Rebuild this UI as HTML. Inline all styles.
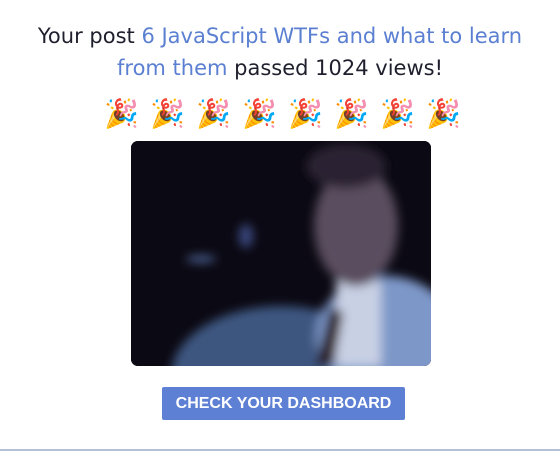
<!DOCTYPE html>
<html><head><style>
body{margin:0;width:560px;height:452px;background:#fff;font-family:"Liberation Sans","DejaVu Sans",sans-serif;position:relative;overflow:hidden}
.t{position:absolute;top:20px;left:0;width:560px;text-align:center;font-family:"DejaVu Sans",sans-serif;font-size:21px;line-height:32px;color:#1f1f2e}
.t b{font-weight:normal;color:#5b7fd1}
.c{position:absolute;top:96px;font-size:28px;line-height:36px}
.img{position:absolute;left:131px;top:141px;width:300px;height:225px;border-radius:7px;overflow:hidden;background:#0b0913}
.btn{position:absolute;left:162px;top:387px;width:243px;height:33px;background:#5e80d4;border-radius:2px;color:#fff;font-weight:bold;font-size:16px;line-height:33px;text-align:center}
.line{position:absolute;left:0;top:449px;width:560px;height:2px;background:#b4c0d6}
</style></head><body>
<div class="t">Your post <b>6 JavaScript WTFs and what to learn<br>from them</b> passed 1024 views!</div>
<div class="c" style="left:104px">🎉</div><div class="c" style="left:150px">🎉</div><div class="c" style="left:196px">🎉</div><div class="c" style="left:242px">🎉</div><div class="c" style="left:288px">🎉</div><div class="c" style="left:334px">🎉</div><div class="c" style="left:380px">🎉</div><div class="c" style="left:426px">🎉</div>
<div class="img">
<svg width="300" height="225">
<defs><filter id="b"><feGaussianBlur stdDeviation="5"/></filter></defs>
<rect width="300" height="225" fill="#0b0913"/>
<g filter="url(#b)">
<ellipse cx="150" cy="235" rx="110" ry="70" fill="#3e5680"/>
<ellipse cx="255" cy="195" rx="70" ry="60" fill="#7d97c8"/>
<rect x="205" y="140" width="45" height="85" fill="#c8d0e4"/>
<ellipse cx="225" cy="85" rx="42" ry="60" fill="#5a4e5e"/>
<ellipse cx="215" cy="25" rx="40" ry="22" fill="#2a2030"/>
<polygon points="185,225 200,165 212,172 202,225" fill="#2b1818"/>
<ellipse cx="70" cy="118" rx="15" ry="3" fill="#5a76b0"/>
<ellipse cx="115" cy="95" rx="7" ry="12" fill="#3a4a80"/>
</g>
</svg>
</div>
<div class="btn">CHECK YOUR DASHBOARD</div>
<div class="line"></div>
</body></html>
